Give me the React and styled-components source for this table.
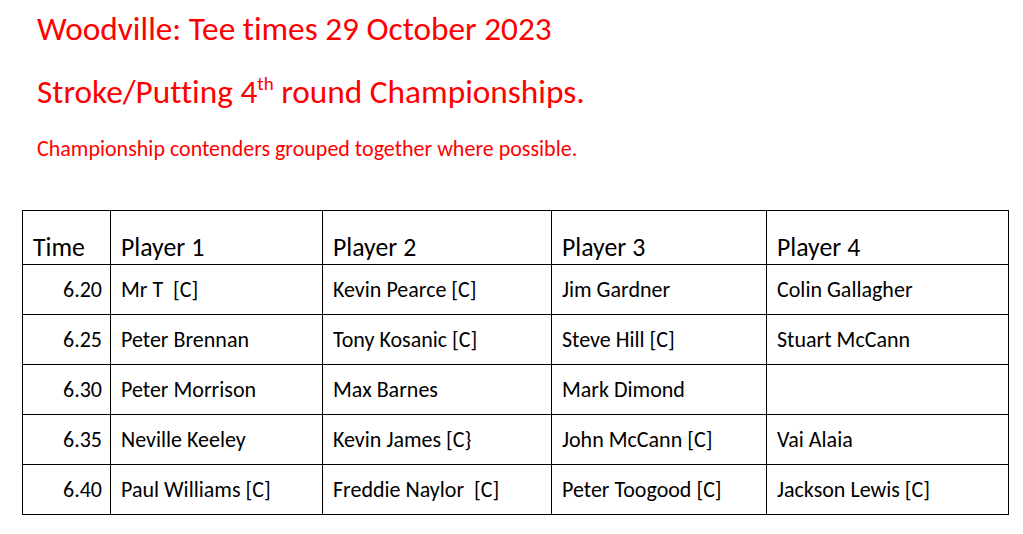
import React from "react";
import styled, { createGlobalStyle } from "styled-components";

const GlobalStyle = createGlobalStyle`
  html, body { margin: 0; padding: 0; background: #fff; }
  body {
    font-family: Carlito, "Open Sans", "Noto Sans", sans-serif;
    font-variant-ligatures: none;
    color: #000;
  }
`;

const rows = [
  ["6.20", "Mr T  [C]", "Kevin Pearce [C]", "Jim Gardner", "Colin Gallagher"],
  ["6.25", "Peter Brennan", "Tony Kosanic [C]", "Steve Hill [C]", "Stuart McCann"],
  ["6.30", "Peter Morrison", "Max Barnes", "Mark Dimond", ""],
  ["6.35", "Neville Keeley", "Kevin James [C}", "John McCann [C]", "Vai Alaia"],
  ["6.40", "Paul Williams [C]", "Freddie Naylor  [C]", "Peter Toogood [C]", "Jackson Lewis [C]"],
];

const Page = styled.div`
  padding: 9px 15px 0 22px;
`;

const Heading = styled.h1`
  margin: 0 0 0 15px;
  font-weight: 400;
  font-size: 33.3px;
  line-height: 40px;
  color: #ff0000;
  & + & { margin-top: 23px; }
  sup { font-size: 19px; line-height: 0; vertical-align: 13px; }
`;

const Note = styled.p`
  margin: 24px 0 0 15px;
  font-size: 22px;
  line-height: 26px;
  color: #ff0000;
`;

const Table = styled.table`
  margin-top: 48px;
  width: 987px;
  border-collapse: collapse;
  table-layout: fixed;
  white-space: pre;
`;

const Head = styled.th`
  border: 1.5px solid #000;
  height: 51px;
  padding: 0 0 2px 10px;
  vertical-align: bottom;
  text-align: left;
  font-weight: 400;
  font-size: 25.8px;
  line-height: 30px;
`;

const Cell = styled.td`
  border: 1.5px solid #000;
  height: 49px;
  padding: 0 ${(p) => (p.$right ? "8px" : "0")} 0 10px;
  text-align: ${(p) => (p.$right ? "right" : "left")};
  font-size: 22px;
  line-height: 26px;
`;

export default function App() {
  return (
    <Page>
      <GlobalStyle />
      <Heading>Woodville: Tee times 29 October 2023</Heading>
      <Heading>
        Stroke/Putting 4<sup>th</sup> round Championships.
      </Heading>
      <Note>Championship contenders grouped together where possible.</Note>
      <Table>
        <colgroup>
          <col style={{ width: 88 }} />
          <col style={{ width: 212 }} />
          <col style={{ width: 229 }} />
          <col style={{ width: 215 }} />
          <col />
        </colgroup>
        <thead>
          <tr>
            <Head>Time</Head>
            <Head>Player 1</Head>
            <Head>Player 2</Head>
            <Head>Player 3</Head>
            <Head>Player 4</Head>
          </tr>
        </thead>
        <tbody>
          {rows.map((r) => (
            <tr key={r[0]}>
              {r.map((c, i) => (
                <Cell key={i} $right={i === 0}>
                  {c}
                </Cell>
              ))}
            </tr>
          ))}
        </tbody>
      </Table>
    </Page>
  );
}
